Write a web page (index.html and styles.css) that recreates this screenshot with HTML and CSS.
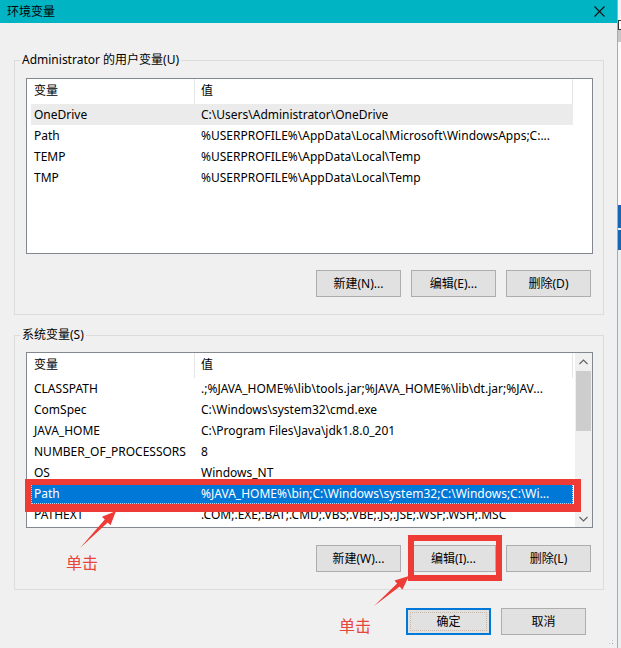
FILE: index.html
```html
<!DOCTYPE html>
<html lang="zh-CN">
<head>
<meta charset="utf-8">
<title>环境变量</title>
<link rel="stylesheet" href="styles.css">
</head>
<body>
<div class="screen">
  <div class="dialog">
    <div class="titlebar">
      <span class="title">环境变量</span>
      <svg class="close" width="11" height="11" viewBox="0 0 11 11"><path d="M0.5 0.5 L10.5 10.5 M10.5 0.5 L0.5 10.5" stroke="#111" stroke-width="1.1" fill="none"/></svg>
    </div>
    <div class="content">
      <fieldset class="group group-user">
        <legend>Administrator 的用户变量(U)</legend>
        <div class="listview">
          <div class="lv-main">
            <div class="lv-header"><div class="hcell">变量</div><div class="hcell">值</div></div>
            <div class="row hover"><span>OneDrive</span><span>C:\Users\Administrator\OneDrive</span></div>
            <div class="row"><span>Path</span><span>%USERPROFILE%\AppData\Local\Microsoft\WindowsApps;C:...</span></div>
            <div class="row"><span>TEMP</span><span>%USERPROFILE%\AppData\Local\Temp</span></div>
            <div class="row"><span>TMP</span><span>%USERPROFILE%\AppData\Local\Temp</span></div>
          </div>
        </div>
        <div class="btn-row">
          <button class="btn">新建(N)...</button>
          <button class="btn">编辑(E)...</button>
          <button class="btn">删除(D)</button>
        </div>
      </fieldset>

      <fieldset class="group group-system">
        <legend>系统变量(S)</legend>
        <div class="listview">
          <div class="lv-main">
            <div class="lv-header"><div class="hcell">变量</div><div class="hcell">值</div></div>
            <div class="row"><span>CLASSPATH</span><span>.;%JAVA_HOME%\lib\tools.jar;%JAVA_HOME%\lib\dt.jar;%JAV...</span></div>
            <div class="row"><span>ComSpec</span><span>C:\Windows\system32\cmd.exe</span></div>
            <div class="row"><span>JAVA_HOME</span><span>C:\Program Files\Java\jdk1.8.0_201</span></div>
            <div class="row"><span>NUMBER_OF_PROCESSORS</span><span>8</span></div>
            <div class="row"><span>OS</span><span>Windows_NT</span></div>
            <div class="row selected"><span>Path</span><span>%JAVA_HOME%\bin;C:\Windows\system32;C:\Windows;C:\Wi...</span></div>
            <div class="row"><span>PATHEXT</span><span>.COM;.EXE;.BAT;.CMD;.VBS;.VBE;.JS;.JSE;.WSF;.WSH;.MSC</span></div>
          </div>
          <div class="scrollbar">
            <div class="sb-btn"><svg width="9" height="6" viewBox="0 0 9 6"><polyline points="0.5,5 4.5,1 8.5,5" fill="none" stroke="#606060" stroke-width="1.1"/></svg></div>
            <div class="sb-track"><div class="sb-thumb"></div></div>
            <div class="sb-btn"><svg width="9" height="6" viewBox="0 0 9 6"><polyline points="0.5,1 4.5,5 8.5,1" fill="none" stroke="#606060" stroke-width="1.1"/></svg></div>
          </div>
        </div>
        <div class="btn-row">
          <button class="btn">新建(W)...</button>
          <button class="btn">编辑(I)...</button>
          <button class="btn">删除(L)</button>
        </div>
      </fieldset>

      <div class="footer">
        <button class="btn btn-default">确定</button>
        <button class="btn">取消</button>
      </div>
    </div>
    <div class="grip"></div>
  </div>

  <div class="bg-strip">
    <div class="s-top"></div>
    <div class="s-icon"></div>
    <div class="s-gray"></div>
    <div class="s-white"></div>
    <div class="s-blue"></div>
    <div class="s-gap"></div>
    <div class="s-blue s-blue2"></div>
    <div class="s-rest"></div>
  </div>

  <!-- annotations -->
  <div class="mark mark-path"></div>
  <div class="mark mark-edit"></div>
  <svg class="arrows" width="621" height="648" viewBox="0 0 621 648">
    <polygon points="80,548 104.8,519.6 101.9,516.8 116,511 110.5,525.2 107.7,522.4" fill="#ef3b36"/>
    <polygon points="374,606 397.1,583.6 394.5,580.5 409,576 402.3,589.7 399.7,586.6" fill="#ef3b36"/>
  </svg>
  <span class="tap tap-1">单击</span>
  <span class="tap tap-2">单击</span>
</div>
</body>
</html>
```

FILE: styles.css
```css
* { box-sizing: border-box; }

html, body {
  margin: 0;
  padding: 0;
}

body {
  width: 621px;
  height: 648px;
  overflow: hidden;
  background: #f0f0f0;
  font-family: "Noto Sans", "Noto Sans CJK SC", sans-serif;
  font-size: 12px;
  color: #000;
}

.screen {
  position: relative;
  display: flex;
  width: 621px;
  height: 648px;
}

.dialog {
  position: relative;
  width: 618px;
  height: 648px;
  flex: none;
  display: flex;
  flex-direction: column;
  background: #f0f0f0;
  border-right: 1px solid #8ab8bd;
}

.titlebar {
  flex: none;
  height: 23px;
  background: #00b4c4;
  display: flex;
  align-items: center;
  justify-content: space-between;
  padding: 0 12px 1px 7px;
}

.title {
  font-family: "Noto Sans CJK SC", sans-serif;
  font-size: 12px;
  line-height: 16px;
}

.close { display: block; }

.content {
  padding-left: 14px;
}

.group {
  margin: 0;
  width: 590px;
  min-width: 0;
  border: 1px solid #dcdcdc;
  padding: 10px 10px 17px 11px;
}

.group legend {
  padding: 0 2px;
  margin-left: -6px;
  line-height: 16px;
  font-size: 12px;
}

.group-user { margin-top: 29px; }
.group-system { margin-top: 12px; padding-top: 9px; }

.listview {
  height: 176px;
  border: 1px solid #828790;
  background: #fff;
  display: flex;
  overflow: hidden;
}

.lv-main {
  flex: 1;
  min-width: 0;
  overflow: hidden;
}

.lv-header {
  display: grid;
  grid-template-columns: 168px 378px;
  height: 25px;
}

.hcell {
  border-right: 1px solid #e5e5e5;
  line-height: 24px;
  padding-left: 7px;
}
.hcell + .hcell { padding-left: 6px; }

.row {
  display: grid;
  grid-template-columns: 164px 378px;
  width: 542px;
  margin-left: 4px;
  height: 21px;
  line-height: 21px;
  white-space: nowrap;
}

.row span {
  overflow: hidden;
  padding-left: 3px;
}
.row span + span { padding-left: 6px; }

.row.hover { background: #ebebeb; }

.row.selected {
  background: #0078d7;
  color: #fff;
  outline: 1px dotted rgba(255, 255, 255, 0.7);
  outline-offset: -1px;
}

.scrollbar {
  width: 17px;
  flex: none;
  display: flex;
  flex-direction: column;
  background: #f0f0f0;
}

.sb-btn {
  height: 17px;
  flex: none;
  display: flex;
  align-items: center;
  justify-content: center;
}

.sb-track {
  flex: 1;
  padding: 1px 1px 0;
}

.sb-thumb {
  height: 60px;
  background: #cdcdcd;
}

.btn-row {
  display: flex;
  justify-content: flex-end;
  gap: 10px;
  margin-top: 16px;
  padding-right: 2px;
}

.group-system .btn-row { margin-top: 17px; }

.btn {
  width: 85px;
  height: 27px;
  margin: 0;
  padding: 0;
  border: 1px solid #adadad;
  background: #e1e1e1;
  font-family: "Noto Sans", "Noto Sans CJK SC", sans-serif;
  font-size: 12px;
  line-height: 24px;
  color: #000;
  text-align: center;
}

.btn-default {
  border-color: #0078d7;
  box-shadow: inset 0 0 0 1px #0078d7;
  outline: 1px dotted #c9b8a8;
  outline-offset: -5px;
}

.footer {
  display: flex;
  justify-content: flex-end;
  gap: 10px;
  margin-top: 18px;
  padding-right: 31px;
}

.grip {
  position: absolute;
  right: 3px;
  bottom: 3px;
  width: 6px;
  height: 6px;
  background:
    radial-gradient(circle, #a0a0a0 0.8px, transparent 1px) 0 0 / 3px 3px;
  clip-path: polygon(100% 0, 100% 100%, 0 100%);
}

.bg-strip {
  width: 3px;
  flex: none;
  display: flex;
  flex-direction: column;
  background: #eef2f2;
}
.s-top { height: 20px; background: #f3f3f3; }
.s-icon { height: 10px; background: #fff; border: 1px solid #333; border-right: 0; }
.s-gray { height: 12px; background: #c7c7c7; }
.s-white { height: 163px; background: #fafafa; }
.s-blue { height: 23px; background: #1666b8; }
.s-gap { height: 2px; background: #e8f0f8; }
.s-blue2 { height: 20px; }
.s-rest { flex: 1; background: #e9f0f0; }

/* annotations */
.mark {
  position: absolute;
  border: 6px solid #ef3b36;
}

.mark-path {
  left: 25px;
  top: 479px;
  width: 556px;
  height: 33px;
  border-width: 6px 7px 8px 6px;
}

.mark-edit {
  left: 408px;
  top: 535px;
  width: 94px;
  height: 46px;
}

.arrows {
  position: absolute;
  left: 0;
  top: 0;
  pointer-events: none;
}

.tap {
  position: absolute;
  font-family: "Noto Sans CJK SC", sans-serif;
  font-size: 16px;
  line-height: 20px;
  color: #e8453c;
}
.tap-1 { left: 66px; top: 552px; }
.tap-2 { left: 339px; top: 615px; }
```
